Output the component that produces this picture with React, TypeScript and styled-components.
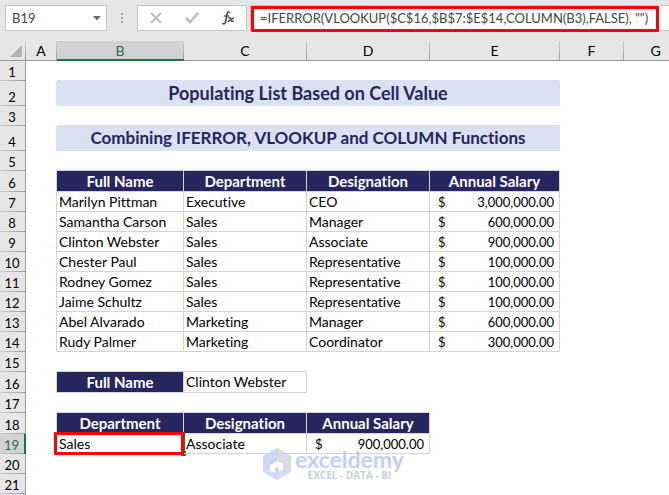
import React from 'react';
import styled, { createGlobalStyle, css } from 'styled-components';

const GRID = '#d4d4d4';
const NAVY = '#27265f';
const BAND = '#d9e1f2';
const GREEN = '#217346';
const CHROME = '#e6e6e6';
const RULE = '#9b9b9b';

const GlobalStyle = createGlobalStyle`
  * { box-sizing: border-box; }
  html, body { margin: 0; background: #fff; overflow: hidden; }
  body {
    font-family: Lato, Carlito, sans-serif;
    font-size: 14px;
    font-variant-ligatures: none;
    color: #000;
  }
`;

const Workbook = styled.main`
  width: 100%;
  min-height: 100vh;
  background: #fff;
`;

const FormulaBar = styled.header`
  display: flex;
  align-items: center;
  padding: 5px 0 10px 5px;
  background: ${CHROME};
`;

const barBox = css`
  height: 26px;
  background: #fff;
  border: 1px solid #c6c6c6;
`;

const NameBox = styled.div`
  ${barBox}
  flex: none;
  width: 102px;
  display: flex;
  align-items: center;
`;

const barText = css`
  height: 100%;
  border: 0;
  outline: 0;
  background: transparent;
  color: #444;
  font: 13px Lato, sans-serif;
`;

const NameInput = styled.input`
  ${barText}
  flex: 1;
  min-width: 0;
  padding: 0 0 0 6px;
`;

const IconButton = styled.button`
  display: flex;
  align-items: center;
  justify-content: center;
  width: 36px;
  height: 100%;
  padding: 0;
  border: 0;
  background: transparent;
`;

const NameToggle = styled(IconButton)`
  width: 19px;
`;

const Grip = styled.div`
  flex: none;
  display: flex;
  justify-content: center;
  width: 30px;
`;

const Actions = styled.div`
  ${barBox}
  flex: none;
  width: 110px;
  display: flex;
`;

const FormulaField = styled.div`
  ${barBox}
  flex: 1;
  min-width: 0;
  margin-left: 3px;
  border-right: 0;
  position: relative;
`;

const FormulaInput = styled.input`
  ${barText}
  width: 100%;
  padding: 0 0 0 9px;
`;

const Highlight = styled.div<{ $inset: string }>`
  position: absolute;
  inset: ${(p) => p.$inset};
  border: 3px solid #fe0000;
  border-radius: 1px;
  pointer-events: none;
`;

const SheetArea = styled.section`
  position: relative;
  overflow: hidden;
`;

const Sheet = styled.table`
  table-layout: fixed;
  width: 100%;
  min-width: 688px;
  border-collapse: separate;
  border-spacing: 0;
  line-height: 18px;
`;

const Col = styled.col<{ $w?: number }>`
  width: ${(p) => (p.$w ? `${p.$w}px` : 'auto')};
`;

const Row = styled.tr<{ $h: number }>`
  height: ${(p) => p.$h}px;
`;

const ColHead = styled.th<{ $active?: boolean }>`
  height: 20px;
  padding: 0 1px 0 0;
  font-weight: 400;
  background: linear-gradient(#cfcfcf, ${RULE}) right / 1px 100% no-repeat ${(p) => (p.$active ? '#d2d2d2' : CHROME)};
  color: ${(p) => (p.$active ? GREEN : '#000')};
  box-shadow: inset 0 ${(p) => (p.$active ? '-2px' : '-1px')} ${(p) => (p.$active ? GREEN : RULE)};
`;

const Corner = styled(ColHead)`
  padding: 0 4px 4px 0;
  vertical-align: bottom;
  svg { display: block; margin-left: auto; }
`;

const RowHead = styled.th<{ $active?: boolean }>`
  padding: 0 1px 0 0;
  vertical-align: bottom;
  font-size: 13px;
  font-weight: 400;
  background: linear-gradient(90deg, #cfcfcf, ${RULE}) bottom / 100% 1px no-repeat ${(p) => (p.$active ? '#d2d2d2' : CHROME)};
  color: ${(p) => (p.$active ? GREEN : '#000')};
  border-right: ${(p) => (p.$active ? `2px solid ${GREEN}` : `1px solid ${RULE}`)};
`;

const Cell = styled.td<{ $right?: string; $bottom?: string }>`
  padding: 0 2px;
  border-right: 1px solid ${(p) => p.$right ?? 'transparent'};
  border-bottom: 1px solid ${(p) => p.$bottom ?? 'transparent'};
  white-space: nowrap;
  position: relative;
`;

const Title = styled(Cell)<{ $large?: boolean }>`
  background: ${BAND};
  color: ${NAVY};
  font-size: ${(p) => (p.$large ? 18 : 17)}px;
  font-weight: 700;
  text-align: center;
`;

const Label = styled(Cell)`
  background: ${NAVY};
  background-clip: padding-box;
  color: #fff;
  font-size: 15px;
  font-weight: 700;
  text-align: center;
`;

const Money = styled.span`
  display: flex;
  justify-content: space-between;
  padding: 0 3px 0 6px;
  font-size: 13px;
`;

const Selection = styled.div`
  position: absolute;
  inset: -2px;
  border: 2px solid ${GREEN};
  pointer-events: none;
  &::after {
    content: '';
    position: absolute;
    right: -3px;
    bottom: -3px;
    width: 5px;
    height: 5px;
    background: ${GREEN};
  }
`;

const Watermark = styled.div`
  position: absolute;
  left: 263px;
  top: 407px;
  display: flex;
  gap: 4px;
  opacity: 0.8;
`;

const Brand = styled.div`
  display: flex;
  flex-direction: column;
  align-items: center;
`;

const BrandName = styled.span`
  font: 700 23px/22px Lato, sans-serif;
  color: #b4c5f8;
`;

const BrandTag = styled.span`
  font: 700 10px/10px 'Open Sans', sans-serif;
  color: #bfc4ce;
`;

const columns = ['A', 'B', 'C', 'D', 'E', 'F', 'G'];
const widths = [26, 31, 127, 123, 123, 130, 64, undefined];

const people = [
  ['Marilyn Pittman', 'Executive', 'CEO', '3,000,000.00'],
  ['Samantha Carson', 'Sales', 'Manager', '600,000.00'],
  ['Clinton Webster', 'Sales', 'Associate', '900,000.00'],
  ['Chester Paul', 'Sales', 'Representative', '100,000.00'],
  ['Rodney Gomez', 'Sales', 'Representative', '100,000.00'],
  ['Jaime Schultz', 'Sales', 'Representative', '100,000.00'],
  ['Abel Alvarado', 'Marketing', 'Manager', '600,000.00'],
  ['Rudy Palmer', 'Marketing', 'Coordinator', '300,000.00'],
];

function Amount({ value }: { value: string }) {
  return (
    <Cell $right={GRID} $bottom={GRID}>
      <Money><span>$</span><span>{value}</span></Money>
    </Cell>
  );
}

function SheetRow({ n, h = 20, active, children }: { n?: number; h?: number; active?: boolean; children?: React.ReactNode }) {
  return (
    <Row $h={h}>
      <RowHead scope="row" $active={active}>{n}</RowHead>
      {children ?? <Cell colSpan={7} />}
    </Row>
  );
}

/* Empty row whose lower edge is the top rule of the block beneath it. */
function Spacer({ n, span, color }: { n: number; span: number; color: string }) {
  return (
    <SheetRow n={n}>
      <Cell />
      <Cell colSpan={span} $bottom={color} />
      <Cell colSpan={6 - span} />
    </SheetRow>
  );
}

function TitleRow({ n, large, children }: { n: number; large?: boolean; children: string }) {
  return (
    <SheetRow n={n} h={25}>
      <Cell $right={BAND} />
      <Title colSpan={4} $right={BAND} $bottom={BAND} $large={large}>{children}</Title>
      <Cell colSpan={2} />
    </SheetRow>
  );
}

export default function App() {
  return (
    <Workbook>
      <GlobalStyle />
      <FormulaBar>
        <NameBox>
          <NameInput aria-label="Name box" defaultValue="B19" />
          <NameToggle aria-label="Show names">
            <svg width="8" height="5" viewBox="0 0 8 5"><path d="M0 0h8L4 4.5z" fill="#6a6a6a" /></svg>
          </NameToggle>
        </NameBox>
        <Grip>
          <svg width="2" height="11" viewBox="0 0 2 11" fill="#a0a0a0"><path d="M0 0h2v2H0zM0 4h2v2H0zM0 8h2v2H0z" /></svg>
        </Grip>
        <Actions>
          <IconButton aria-label="Cancel">
            <svg width="12" height="12" viewBox="0 0 12 12" fill="none" stroke="#bdbdbd" strokeWidth="1.8"><path d="M1 1l10 10M11 1L1 11" /></svg>
          </IconButton>
          <IconButton aria-label="Enter">
            <svg width="14" height="12" viewBox="0 0 14 12" fill="none" stroke="#bdbdbd" strokeWidth="2.6"><path d="M1 6l4 4 8-9" /></svg>
          </IconButton>
          <IconButton aria-label="Insert function">
            <svg width="13" height="14" viewBox="0 0 13 14" fill="none" stroke="#555" strokeLinecap="round">
              <path d="M7.6 1.4C6.2.4 5.4 1.4 5 3.2L3.6 10.6C3.2 12.6 2.2 13.3.8 12.6" strokeWidth="1.7" />
              <path d="M2.4 5h4.2" strokeWidth="1.3" />
              <path d="M6.6 7c1.6-.8 2 .4 2.3 1.7s.8 2 2.3 1.3M11.5 6.9L6.4 10.4" strokeWidth="1.4" />
            </svg>
          </IconButton>
        </Actions>
        <FormulaField>
          <FormulaInput aria-label="Formula" defaultValue={'=IFERROR(VLOOKUP($C$16,$B$7:$E$14,COLUMN(B3),FALSE), "")'} />
          <Highlight $inset="0 10px -2px 0" />
        </FormulaField>
      </FormulaBar>

      <SheetArea>
        <Sheet>
          <colgroup>{widths.map((w, i) => <Col key={i} $w={w} />)}</colgroup>
          <thead>
            <tr>
              <Corner aria-label="Select all">
                <svg width="12" height="12" viewBox="0 0 12 12"><path d="M12 0v12H0z" fill="#b4b4b4" /></svg>
              </Corner>
              {columns.map((c) => <ColHead key={c} scope="col" $active={c === 'B'}>{c}</ColHead>)}
            </tr>
          </thead>
          <tbody>
            <Spacer n={1} span={4} color={BAND} />
            <TitleRow n={2} large>Populating List Based on Cell Value</TitleRow>
            <Spacer n={3} span={4} color={BAND} />
            <TitleRow n={4}>Combining IFERROR, VLOOKUP and COLUMN Functions</TitleRow>
            <Spacer n={5} span={4} color={GRID} />
            <SheetRow n={6} h={21}>
              <Cell $right={GRID} />
              {['Full Name', 'Department', 'Designation', 'Annual Salary'].map((t) => (
                <Label key={t} $right={GRID} $bottom={GRID}>{t}</Label>
              ))}
              <Cell colSpan={2} />
            </SheetRow>
            {people.map(([name, department, designation, salary], i) => (
              <SheetRow key={name} n={7 + i}>
                <Cell $right={GRID} />
                <Cell $right={GRID} $bottom={GRID}>{name}</Cell>
                <Cell $right={GRID} $bottom={GRID}>{department}</Cell>
                <Cell $right={GRID} $bottom={GRID}>{designation}</Cell>
                <Amount value={salary} />
                <Cell colSpan={2} />
              </SheetRow>
            ))}
            <Spacer n={15} span={2} color={GRID} />
            <SheetRow n={16} h={21}>
              <Cell $right={GRID} />
              <Label $right={GRID} $bottom={GRID}>Full Name</Label>
              <Cell $right={GRID} $bottom={GRID}>Clinton Webster</Cell>
              <Cell colSpan={4} />
            </SheetRow>
            <Spacer n={17} span={3} color={GRID} />
            <SheetRow n={18} h={21}>
              <Cell $right={GRID} />
              {['Department', 'Designation', 'Annual Salary'].map((t) => (
                <Label key={t} $right={GRID} $bottom={GRID}>{t}</Label>
              ))}
              <Cell colSpan={3} />
            </SheetRow>
            <SheetRow n={19} active>
              <Cell $right={GRID} />
              <Cell $right={GRID} $bottom={GRID}>
                Sales
                <Selection />
                <Highlight $inset="-2px -1px -2px -3px" />
              </Cell>
              <Cell $right={GRID} $bottom={GRID}>Associate</Cell>
              <Amount value="900,000.00" />
              <Cell colSpan={3} />
            </SheetRow>
            <SheetRow n={20} />
            <SheetRow n={21} />
            <SheetRow />
          </tbody>
        </Sheet>
        <Watermark>
          <svg width="28" height="32" viewBox="0 0 28 32">
            <path d="M14 0L0 8v16l7 4V12l7-4z" fill="#c3d0fa" />
            <path d="M14 0l14 8v16l-7-4v-8l-7-4z" fill="#cdd1da" />
            <path d="M7 20l7-4 14 8-14 8-14-8z" fill="#c6d2f8" />
            <path d="M7 12l7-4v8l-7 4z" fill="#b9c8f8" />
            <path d="M14 8l7 4v8l-7-4z" fill="#d3d7e0" />
            <path d="M7 17l7-4v6l-2 1v5l-5-2z" fill="#fff" />
            <path d="M14 13l6 3v6l-4 2v-4l-2-1z" fill="#fff" />
          </svg>
          <Brand>
            <BrandName>exceldemy</BrandName>
            <BrandTag>EXCEL - DATA - BI</BrandTag>
          </Brand>
        </Watermark>
      </SheetArea>
    </Workbook>
  );
}
